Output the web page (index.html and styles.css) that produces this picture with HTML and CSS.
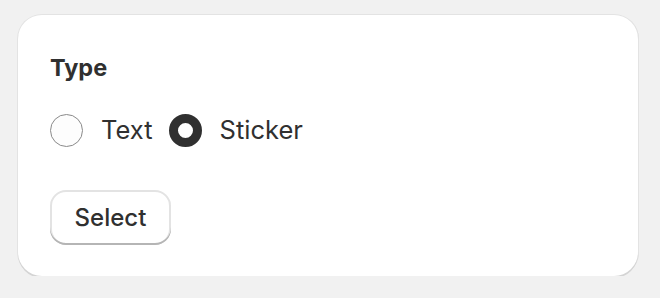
FILE: index.html
```html
<!DOCTYPE html>
<html lang="en">
<head>
  <meta charset="UTF-8">
  <meta name="viewport" content="width=device-width, initial-scale=1.0">
  <title>Type</title>
  <link rel="stylesheet" href="styles.css">
</head>
<body>
  <div class="card">
    <h2 class="card-title">Type</h2>

    <div class="choices">
      <label class="choice">
        <input type="radio" name="type" value="text">
        <span class="radio"></span>
        <span class="choice-label">Text</span>
      </label>
      <label class="choice">
        <input type="radio" name="type" value="sticker" checked>
        <span class="radio"></span>
        <span class="choice-label">Sticker</span>
      </label>
    </div>

    <button class="btn" type="button">Select</button>
  </div>
</body>
</html>
```

FILE: styles.css
```css
* {
  box-sizing: border-box;
}
body {
  margin: 0;
  background-color: #f1f1f1;
  font-family: Inter, "Liberation Sans", Arial, sans-serif;
  color: #303030;
}
.card {
  width: 620px;
  height: 261px;
  margin: 15px 0 0 18px;
  padding: 32px 32px;
  background-color: #fff;
  border-radius: 24px;
  box-shadow: 0 2px 0 0 #d4d4d4, 0 0 0 1px #e3e3e3, 1px 0 0 0 #dcdcdc;
}
.card-title {
  margin: 0;
  font-size: 23.5px;
  line-height: 40px;
  font-weight: 700;
  margin-top: 1px;
}
.choices {
  display: flex;
  align-items: center;
  gap: 16px;
  margin-top: 22px;
}
.choice {
  display: flex;
  align-items: center;
  gap: 18px;
  cursor: pointer;
}
.choice input {
  display: none;
}
.radio {
  width: 33px;
  height: 33px;
  border-radius: 50%;
  border: 1.5px solid #8a8a8a;
  background-color: #fdfdfd;
}
.choice input:checked + .radio {
  border: 9.5px solid #303030;
  background-color: #fff;
}
.choice-label {
  font-size: 25.5px;
  line-height: 40px;
}
.btn {
  display: block;
  margin-top: 40px;
  width: 121px;
  height: 55px;
  padding: 0;
  font-family: inherit;
  font-size: 24px;
  font-weight: 500;
  color: #303030;
  background-color: #fff;
  border: none;
  border-radius: 16px;
  cursor: pointer;
  box-shadow: inset 0 -2px 0 0 #b5b5b5, inset 0 0 0 2px #e3e3e3;
}
```
